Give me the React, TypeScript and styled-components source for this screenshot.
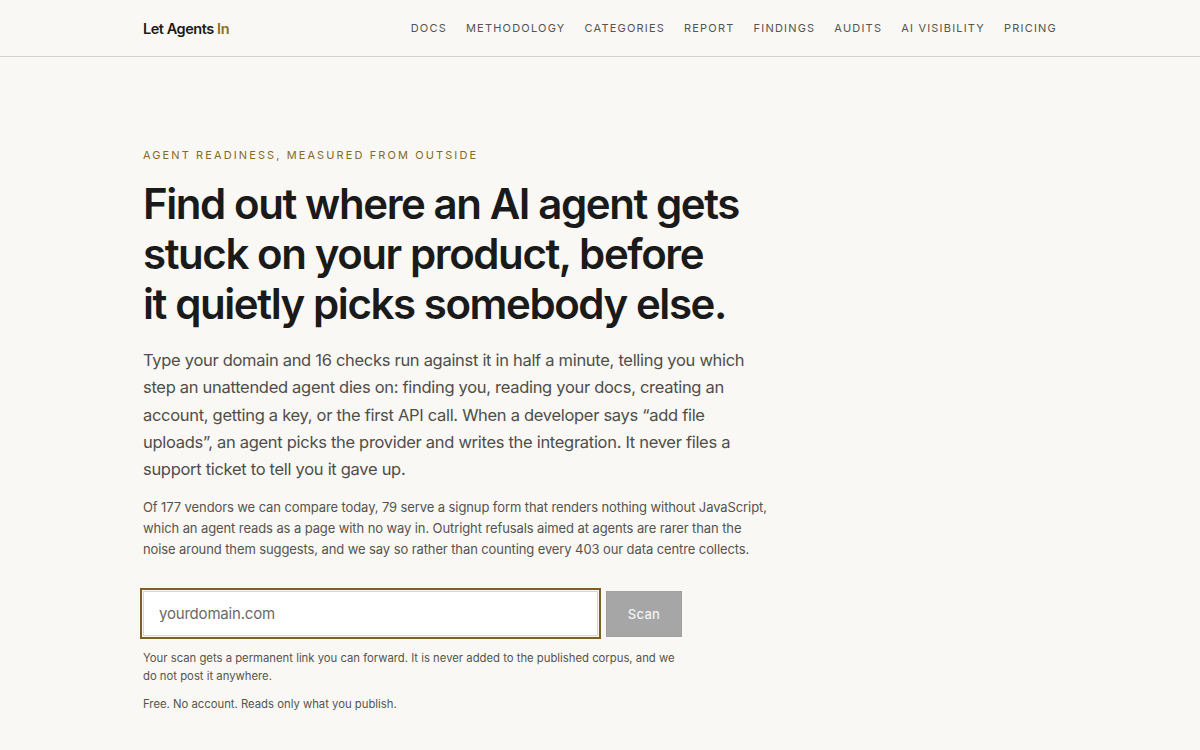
import styled, { createGlobalStyle } from 'styled-components';

const Global = createGlobalStyle`
  html, body {
    margin: 0;
    padding: 0;
    background: #f9f8f4;
  }

  body {
    font-family: Inter, 'Noto Sans', 'Liberation Sans', sans-serif;
    color: #1a1a1a;
    -webkit-font-smoothing: antialiased;
  }

  * {
    box-sizing: border-box;
  }
`;

const Header = styled.header`
  height: 57px;
  border-bottom: 1px solid #d4d2cb;
`;

const Container = styled.div`
  width: 914px;
  margin: 0 auto;
`;

const HeaderInner = styled(Container)`
  height: 100%;
  display: flex;
  align-items: center;
  justify-content: space-between;
`;

const Logo = styled.a`
  font-size: 14.5px;
  font-weight: 600;
  letter-spacing: -0.45px;
  color: #1a1a1a;
  text-decoration: none;

  span {
    color: #8c6d22;
  }
`;

const Nav = styled.nav`
  display: flex;
  gap: 19px;

  a {
    font-size: 11px;
    letter-spacing: 1.2px;
    color: #555450;
    text-decoration: none;
    text-transform: uppercase;
  }
`;

const Hero = styled(Container)`
  padding-top: 91px;
`;

const Eyebrow = styled.p`
  margin: 0 0 17px;
  font-size: 11px;
  letter-spacing: 2.1px;
  text-transform: uppercase;
  color: #86692a;
`;

const Title = styled.h1`
  margin: 0 0 18px;
  max-width: 620px;
  font-size: 42px;
  line-height: 50px;
  font-weight: 600;
  letter-spacing: -1.42px;
  color: #1a1a1a;
`;

const Lead = styled.p`
  margin: 0 0 14px;
  max-width: 620px;
  font-size: 16.5px;
  line-height: 27.3px;
  letter-spacing: -0.3px;
  color: #4f4e4a;
`;

const Note = styled.p<{ $small?: boolean; $mb?: number }>`
  margin: 0 0 ${(p) => p.$mb ?? 0}px;
  max-width: ${(p) => (p.$small ? 540 : 630)}px;
  font-size: ${(p) => (p.$small ? 11.3 : 13)}px;
  line-height: ${(p) => (p.$small ? 17.5 : 21)}px;
  letter-spacing: ${(p) => (p.$small ? 0 : -0.1)}px;
  color: #55544f;
`;

const Form = styled.form`
  display: flex;
  gap: 8px;
  margin: 31px 0 13px;
`;

const Input = styled.input`
  width: 455px;
  height: 45px;
  padding: 0 15px;
  border: 1px solid #d9d6cc;
  outline: 2px solid #7d6122;
  outline-offset: 1px;
  background: #fff;
  font-family: inherit;
  font-size: 15px;
  letter-spacing: -0.2px;
  color: #1a1a1a;

  &::placeholder {
    color: #6a6a66;
  }
`;

const Button = styled.button`
  width: 76px;
  height: 46px;
  border: 1px solid #a0a0a0;
  background: #a6a6a6;
  color: #f2f2f2;
  font-family: inherit;
  font-size: 13px;
  font-weight: 500;
  letter-spacing: 0.3px;
`;

const navItems = [
  'Docs',
  'Methodology',
  'Categories',
  'Report',
  'Findings',
  'Audits',
  'AI Visibility',
  'Pricing',
];

export default function App() {
  return (
    <>
      <Global />
      <Header>
        <HeaderInner>
          <Logo href='#'>
            Let Agents <span>In</span>
          </Logo>
          <Nav>
            {navItems.map((item) => (
              <a key={item} href='#'>
                {item}
              </a>
            ))}
          </Nav>
        </HeaderInner>
      </Header>

      <Hero>
        <Eyebrow>Agent readiness, measured from outside</Eyebrow>
        <Title>
          Find out where an AI agent gets stuck on your product, before
          <br />
          it quietly picks somebody else.
        </Title>
        <Lead>
          Type your domain and 16 checks run against it in half a minute, telling
          you which step an unattended agent dies on: finding you, reading your
          docs, creating an account, getting a key, or the first API call. When a
          developer says “add file uploads”, an agent picks the provider and
          writes the integration. It never files a support ticket to tell you it
          gave up.
        </Lead>
        <Note>
          Of 177 vendors we can compare today, 79 serve a signup form that renders
          nothing without JavaScript, which an agent reads as a page with no way
          in. Outright refusals aimed at agents are rarer than the noise around
          them suggests, and we say so rather than counting every 403 our data
          centre collects.
        </Note>

        <Form onSubmit={(e) => e.preventDefault()}>
          <Input placeholder='yourdomain.com' />
          <Button type='submit'>Scan</Button>
        </Form>

        <Note $small $mb={11}>
          Your scan gets a permanent link you can forward. It is never added to
          the published corpus, and we do not post it anywhere.
        </Note>
        <Note $small>Free. No account. Reads only what you publish.</Note>
      </Hero>
    </>
  );
}
